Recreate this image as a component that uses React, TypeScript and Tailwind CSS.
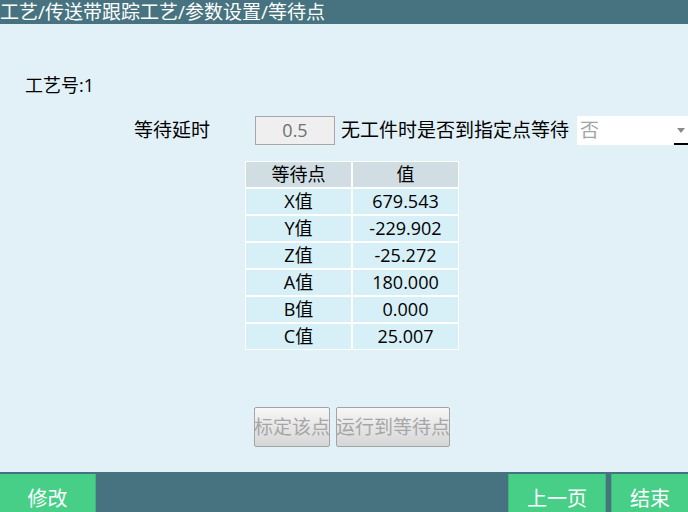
import React from 'react';

const font = { fontFamily: '"Open Sans", "Noto Sans CJK SC", sans-serif' };

const rows: [string, string][] = [
  ['X值', '679.543'],
  ['Y值', '-229.902'],
  ['Z值', '-25.272'],
  ['A值', '180.000'],
  ['B值', '0.000'],
  ['C值', '25.007'],
];

const App: React.FC = () => {
  return (
    <div className="w-[688px] h-[512px] flex flex-col overflow-hidden bg-[#e2f1f7] text-black" style={font}>
      {/* breadcrumb bar */}
      <div className="h-[24px] bg-[#477380] text-white text-[19px] leading-[24px] whitespace-nowrap">
        工艺/传送带跟踪工艺/参数设置/等待点
      </div>

      <div className="flex-1 flex flex-col">
        <div className="mt-[49px] ml-[25px] h-[24px] text-[18px] leading-[24px]">工艺号:1</div>

        {/* wait settings */}
        <div className="mt-[19px] h-[29px] flex items-center whitespace-nowrap text-[19px]">
          <span className="ml-[134px] w-[121px]">等待延时</span>
          <div className="w-[80px] h-[29px] bg-[#efefef] border border-[#a8a8a8] flex items-center justify-center text-[#707070] text-[18px]">
            0.5
          </div>
          <span className="ml-[6px] w-[236px]">无工件时是否到指定点等待</span>
          <div className="flex-1 h-[29px] bg-white relative flex items-center pl-[3px] text-[#a4a4a4]">
            否
            <span className="absolute right-[3px] top-[12px] w-0 h-0 border-l-[4px] border-r-[4px] border-t-[5px] border-l-transparent border-r-transparent border-t-[#8a8a8a]" />
            <span className="absolute right-0 bottom-0 w-[14px] h-[2px] bg-black" />
          </div>
        </div>

        {/* wait point table */}
        <div className="mt-[16px] ml-[245px] w-[214px] bg-white p-[1px] grid grid-cols-[105px_105px] gap-[2px] text-[18px] leading-[25px] text-center">
          <div className="h-[25px] bg-[#d0dee3]">等待点</div>
          <div className="h-[25px] bg-[#d0dee3]">值</div>
          {rows.map(([k, v]) => (
            <React.Fragment key={k}>
              <div className="h-[25px] bg-[#d7eff7]">{k}</div>
              <div className="h-[25px] bg-[#d7eff7]">{v}</div>
            </React.Fragment>
          ))}
        </div>

        {/* disabled actions */}
        <div className="mt-[57px] ml-[254px] flex gap-[6px] text-[19px] text-[#a6a6a6] whitespace-nowrap">
          <div className="w-[76px] h-[40px] rounded-[2px] border border-[#a4a4a4] bg-gradient-to-b from-[#f7f7f7] to-[#d6d6d6] flex items-center justify-center">
            标定该点
          </div>
          <div className="w-[114px] h-[40px] rounded-[2px] border border-[#a4a4a4] bg-gradient-to-b from-[#f7f7f7] to-[#d6d6d6] flex items-center justify-center">
            运行到等待点
          </div>
        </div>
      </div>

      {/* bottom nav */}
      <div className="h-[40px] bg-[#477380] flex pt-[2px] text-white text-[20px]">
        <div className="w-[96px] bg-[#47cf88] border-r border-[#3fb77a] flex items-center justify-center pt-[12px]">修改</div>
        <div className="w-[98px] ml-auto bg-[#47cf88] border-x border-[#3fb77a] flex items-center justify-center pt-[12px]">上一页</div>
        <div className="w-[77px] ml-[5px] bg-[#47cf88] border-l border-[#3fb77a] flex items-center justify-center pt-[12px]">结束</div>
      </div>
    </div>
  );
};

export default App;
